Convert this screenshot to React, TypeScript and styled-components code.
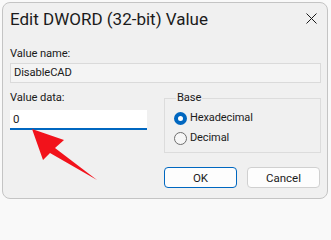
import React from 'react';
import styled, { createGlobalStyle } from 'styled-components';

const GlobalStyle = createGlobalStyle`
  html, body {
    margin: 0;
    padding: 0;
    background: #f9f9f9;
  }
  body {
    font-family: Roboto, 'Noto Sans', 'Liberation Sans', sans-serif;
    color: #1a1a1a;
  }
`;

const Page = styled.div`
  width: 331px;
  height: 202px;
  padding: 2px 3px 3px 2px;
  box-sizing: border-box;
`;

const Window = styled.div`
  position: relative;
  box-sizing: border-box;
  width: 100%;
  height: 100%;
  border: 1px solid #c4c4c4;
  border-radius: 8px;
  background: #f0f0f0;
  display: flex;
  flex-direction: column;
  overflow: hidden;
`;

const TitleBar = styled.div`
  height: 31px;
  display: flex;
  align-items: center;
  justify-content: space-between;
  padding: 0 10px 0 7px;
  flex-shrink: 0;
`;

const Title = styled.span`
  font-size: 17px;
  color: #1b1b1b;
  padding-top: 1px;
`;

const CloseIcon = styled.svg`
  width: 11px;
  height: 11px;
`;

const Content = styled.div`
  display: flex;
  flex-direction: column;
  padding: 12px 6px 0 7px;
  font-size: 11px;
  letter-spacing: -0.1px;
`;

const Label = styled.div<{ $offset?: number }>`
  font-size: 11.2px;
  line-height: 16px;
  color: #1b1b1b;
  margin-top: ${(p) => p.$offset ?? 0}px;
`;

const ReadOnlyBox = styled.div`
  margin-top: 1px;
  height: 20px;
  box-sizing: border-box;
  border: 1px solid #dadada;
  background: #f4f4f4;
  font-size: 11.2px;
  line-height: 18px;
  padding-left: 3px;
  color: #1b1b1b;
`;

const Lower = styled.div`
  display: grid;
  grid-template-columns: 137px 157px;
  column-gap: 17px;
  margin-top: 9px;
`;

const DataColumn = styled.div`
  display: flex;
  flex-direction: column;
`;

const DataInput = styled.div`
  margin-top: 4px;
  height: 20px;
  box-sizing: border-box;
  background: #ffffff;
  border-bottom: 2px solid #0067c0;
  font-size: 11.5px;
  line-height: 18px;
  padding-left: 3px;
  color: #1b1b1b;
`;

const GroupBox = styled.fieldset`
  margin: 0;
  padding: 6px 0 6px 9px;
  border: 1px solid #dcdcdc;
  display: flex;
  flex-direction: column;
  gap: 4px;
`;

const Legend = styled.legend`
  font-size: 11.2px;
  line-height: 12px;
  padding: 0 1px;
  margin-left: 2px;
  color: #1b1b1b;
`;

const RadioRow = styled.label`
  display: flex;
  align-items: center;
  gap: 3px;
  font-size: 11px;
  line-height: 16px;
  color: #1b1b1b;
`;

const RadioDot = styled.span<{ checked?: boolean }>`
  width: 13px;
  height: 13px;
  box-sizing: border-box;
  border-radius: 50%;
  flex-shrink: 0;
  background: ${(p) => (p.checked ? '#ffffff' : '#f6f6f6')};
  border: ${(p) => (p.checked ? '4.5px solid #0067c0' : '1px solid #6e6e6e')};
`;

const Buttons = styled.div`
  grid-column: 2;
  display: flex;
  gap: 10px;
  margin-top: 14px;
`;

const Button = styled.button<{ primary?: boolean }>`
  width: 73px;
  height: 21px;
  box-sizing: border-box;
  border-radius: 4px;
  background: #fdfdfd;
  border: 1px solid ${(p) => (p.primary ? '#0067c0' : '#d0d0d0')};
  font-family: inherit;
  font-size: 11.5px;
  color: #1b1b1b;
  padding: 0;
`;

const Arrow = styled.svg`
  position: absolute;
  left: -3px;
  top: -3px;
  width: 331px;
  height: 202px;
  pointer-events: none;
`;

export default function App() {
  return (
    <Page>
      <GlobalStyle />
      <Window>
        <TitleBar>
          <Title>Edit DWORD (32-bit) Value</Title>
          <CloseIcon viewBox="0 0 11 11">
            <path d="M0.5 0.5 L10.5 10.5 M10.5 0.5 L0.5 10.5" stroke="#1b1b1b" strokeWidth="1" />
          </CloseIcon>
        </TitleBar>
        <Content>
          <Label>Value name:</Label>
          <ReadOnlyBox>DisableCAD</ReadOnlyBox>
          <Lower>
            <DataColumn>
              <Label $offset={-2}>Value data:</Label>
              <DataInput>0</DataInput>
            </DataColumn>
            <GroupBox>
              <Legend>Base</Legend>
              <RadioRow>
                <RadioDot checked />
                Hexadecimal
              </RadioRow>
              <RadioRow>
                <RadioDot />
                Decimal
              </RadioRow>
            </GroupBox>
            <Buttons>
              <Button primary>OK</Button>
              <Button>Cancel</Button>
            </Buttons>
          </Lower>
        </Content>
        <Arrow viewBox="0 0 331 202">
          <polygon
            points="32,129 64,140 55,148 97,180 50,153 43,160"
            fill="#f2121b"
          />
        </Arrow>
      </Window>
    </Page>
  );
}
